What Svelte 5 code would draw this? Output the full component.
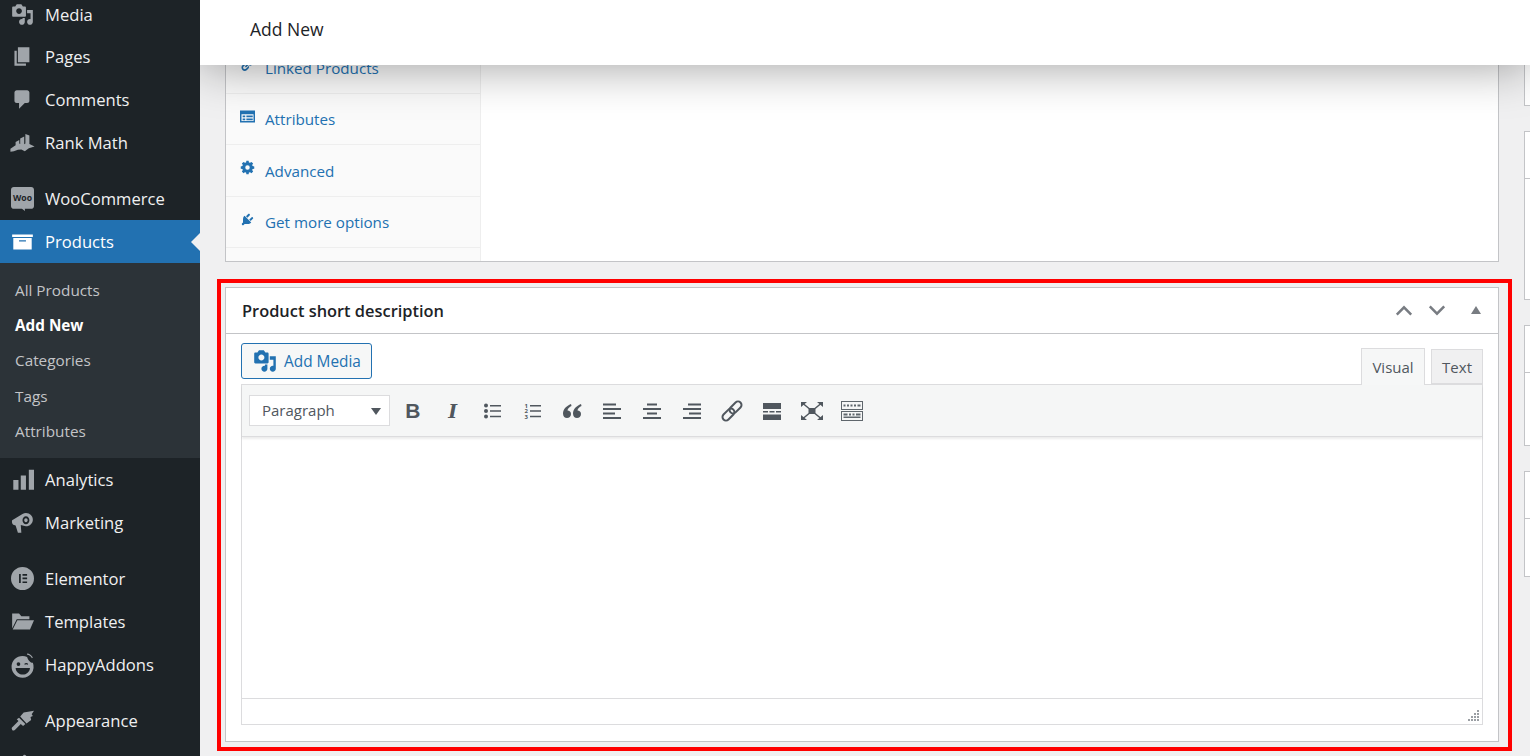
<script>
    const icons = {
        media: "M13 11V4c0-.55-.45-1-1-1h-1.67L9 1H5L3.67 3H2c-.55 0-1 .45-1 1v7c0 .55.45 1 1 1h10c.55 0 1-.45 1-1zM7 4.5c1.38 0 2.5 1.12 2.5 2.5S8.38 9.5 7 9.5 4.5 8.38 4.5 7 5.62 4.5 7 4.5zM14 6h5v10.5c0 1.38-1.12 2.5-2.5 2.5S14 17.88 14 16.5s1.12-2.5 2.5-2.5c.17 0 .34.02.5.05V9h-3V6zm-4 8.05V13h2v3.5c0 1.38-1.12 2.5-2.5 2.5S7 17.88 7 16.5 8.12 14 9.5 14c.17 0 .34.02.5.05z",
        pages: "M6 15V2h10v13H6zm-1 1h8v2H3V5h2v11z",
        comments: "M5 2h9c1.1 0 2 .9 2 2v7c0 1.1-.9 2-2 2h-2l-5 5v-5H5c-1.1 0-2-.9-2-2V4c0-1.1.9-2 2-2z",
        rank: "M-.5 15.500L4 12.300V9.500l3.200-1.600v3l.8.500V6.500l3.500-1.800v6.800l1-.7V2.500l3.500 1.500v7.300l4.500 2.200-5 1.500-3.500 2.500-3-1.500-3 .3-3.500 1.200L-.5 18z",
        woo: "M2.500 0h15C19 0 20 1 20 2.500v14c0 1.500-1 2.500-2.500 2.500H12l.2 1.800L9.500 19h-7C1 19 0 18 0 16.500v-14C0 1 1 0 2.500 0z",
        products: "M19 4v2H1V4h18zM2 7h16v10H2V7zm11 3V9H7v1h6z",
        analytics: "M2 10.500h4.500V19H2zM8.500 6.500H13V19H8.500zM15.500 1.500H20V19h-4.500z",
        marketing: "M1 8l9-5.500c1-.5 2-.7 3-.7 3.500 0 6 2.700 6 5.700s-2.500 5.700-6 5.700c-.7 0-1.500-.2-2-.4l-2.500-.6L9 19H6l-2-6.500-2-.5c-1-.5-1.500-3-1-4zm12-3.500c-1.700 0-3 1.500-3 3.500s1.300 3.500 3 3.500 3-1.500 3-3.500-1.300-3.500-3-3.500zm0 1.800c.9 0 1.500.8 1.500 1.700s-.6 1.700-1.500 1.700-1.500-.8-1.500-1.700.6-1.700 1.500-1.700z",
        elementor: "M10 0a10 10 0 1 0 0 20 10 10 0 0 0 0-20zM7 6h1.500v8H7zM10 6h4v1.500h-4zM10 9.200h4v1.500h-4zM10 12.500h4V14h-4z",
        templates: "M1 3h6l2 2.500h7V8H5L1 16zM5.500 9H20l-3.500 8H1.500z",
        happy: "M10 2.500a9.500 9.500 0 0 0 0 19 9.500 9.500 0 0 0 9-13C18 9 15 7 14 3.500c-1.200-.6-2.600-1-4-1zM6.500 8a1.600 1.600 0 1 1 0 3.200 1.600 1.600 0 0 1 0-3.200zm5 1.500c1-1 2.500-1 3.500 0l-.6.8c-.8-.6-1.600-.6-2.300 0zM4 13h12.500c-.3 3.300-3 5.800-6.200 5.800S4.200 16.300 4 13zM14 .5c2 .1 4 1.500 5 3.500l-.8.5c-.9-1.700-2.500-2.900-4.200-3z",
        appearance: "M7 7.500l5.500 5.500-2 1.800-2-1.800L4 17.500c-1 1.500-3 1.500-3 .5-1-1.500 0-2 1-3l4.500-4.500L5 9zM8 6.500L11 3l9-1.500-2 3 1 1.500-2 1 .5 2.500-4 3z",
        plugins: "M13.11 4.36L9.87 7.6 8 5.73l3.24-3.24c.35-.34 1.05-.2 1.56.32.52.51.66 1.21.31 1.55zm-8 1.77l.91-1.12 9.01 9.01-1.19.84c-.71.71-2.63 1.16-3.82 1.16H6.14L4.9 17.26c-.59.59-1.54.59-2.12 0-.59-.58-.59-1.53 0-2.12l1.24-1.24v-3.88c0-1.13.4-3.19 1.09-3.89zm7.26 3.97l3.24-3.24c.34-.35 1.04-.21 1.55.31.52.51.66 1.21.31 1.55l-3.24 3.25z",
        link: "M17.74 2.76c1.68 1.69 1.68 4.41 0 6.1l-1.53 1.52c-1.12 1.12-2.7 1.47-4.14 1.09l2.62-2.61.76-.77.76-.76c.84-.84.84-2.2 0-3.04-.84-.85-2.2-.85-3.04 0l-.77.76-3.38 3.38c-.37-1.44-.02-3.02 1.1-4.14l1.52-1.53c1.69-1.68 4.42-1.68 6.1 0zM8.59 13.43l5.34-5.34c.42-.42.42-1.1 0-1.52-.44-.43-1.13-.39-1.53 0l-5.33 5.34c-.42.42-.42 1.1 0 1.52.44.43 1.13.39 1.52 0zm-.76 2.29l4.14-4.15c.38 1.44.03 3.02-1.09 4.14l-1.52 1.53c-1.69 1.68-4.41 1.68-6.1 0-1.68-1.68-1.68-4.42 0-6.1l1.53-1.52c1.12-1.12 2.7-1.47 4.14-1.1l-4.14 4.15c-.85.84-.85 2.2 0 3.05.84.84 2.2.84 3.04 0z",
        attributes: "M0 2h20v16H0zM2 7v9h16V7zM3.500 8.500h3.500v2.500H3.500zM3.500 12.500h3.500V15H3.500zM8.500 8.500H17v2.500H8.500zM8.500 12.500H17V15H8.500z",
        gear: "M8.500 1h3l.4 2.200 1.500.6L15.300 2.500l2.200 2.200-1.300 1.900.6 1.500 2.200.4v3l-2.200.4-.6 1.500 1.300 1.900-2.200 2.200-1.900-1.300-1.500.6-.4 2.200h-3l-.4-2.200-1.500-.6-1.900 1.300-2.200-2.200 1.300-1.900-.6-1.500L1 11.500v-3l2.200-.4.6-1.500-1.300-1.900 2.200-2.200 1.900 1.300 1.500-.6zM10 7a3 3 0 1 0 0 6 3 3 0 0 0 0-6z"
    };

    const menu = [
        { label: "Media", icon: "media" },
        { label: "Pages", icon: "pages" },
        { label: "Comments", icon: "comments" },
        { label: "Rank Math", icon: "rank", sep: true },
        { label: "WooCommerce", icon: "woo" },
        { label: "Products", icon: "products", current: true },
        { label: "Analytics", icon: "analytics" },
        { label: "Marketing", icon: "marketing", sep: true },
        { label: "Elementor", icon: "elementor" },
        { label: "Templates", icon: "templates" },
        { label: "HappyAddons", icon: "happy", sep: true },
        { label: "Appearance", icon: "appearance" },
        { label: "", icon: "plugins" }
    ];

    const submenu = ["All Products", "Add New", "Categories", "Tags", "Attributes"];

    const tabs = [
        { label: "Linked Products", icon: "link" },
        { label: "Attributes", icon: "attributes" },
        { label: "Advanced", icon: "gear" },
        { label: "Get more options", icon: "plugins" }
    ];

    const sideBoxes = [
        { head: 0, height: 116 },
        { head: 47, height: 169 },
        { head: 47, height: 121 },
        { head: 47, height: 106 }
    ];
</script>

<div class="page">
    <nav class="sidebar">
        {#each menu as item}
            <a class="item" class:current={item.current} class:sep={item.sep} href="#top">
                <svg class="item-icon" viewBox="0 0 20 20">
                    <path d={icons[item.icon]} fill-rule="evenodd" />
                    {#if item.icon === "woo"}
                        <text class="woo-text" x="10" y="12" text-anchor="middle">Woo</text>
                    {/if}
                </svg>
                <span>{item.label}</span>
            </a>
            {#if item.current}
                <div class="submenu">
                    {#each submenu as sub}
                        <a class="sub" class:on={sub === "Add New"} href="#top">{sub}</a>
                    {/each}
                </div>
            {/if}
        {/each}
    </nav>

    <main class="main">
        <header class="topbar">Add New</header>

        <div class="columns">
            <div class="content">
                <section class="card data">
                    <ul class="tabs">
                        {#each tabs as tab}
                            <li>
                                <svg viewBox="0 0 20 20"><path d={icons[tab.icon]} fill-rule="evenodd" /></svg>
                                <a href="#top">{tab.label}</a>
                            </li>
                        {/each}
                    </ul>
                    <div class="panel"></div>
                </section>

                <section class="card short">
                    <div class="card-head">
                        <h2>Product short description</h2>
                        <div class="handles">
                            <svg viewBox="0 0 20 12"><path d="M2 10.500l8-8 8 8" /></svg>
                            <svg viewBox="0 0 20 12"><path d="M2 1.500l8 8 8-8" /></svg>
                            <i class="toggle"></i>
                        </div>
                    </div>
                    <div class="card-body">
                        <div class="editor-tools">
                            <button class="add-media">
                                <svg viewBox="0 0 20 20"><path d={icons.media} fill-rule="evenodd" /></svg>
                                Add Media
                            </button>
                            <div class="modes">
                                <span class="mode active">Visual</span>
                                <span class="mode">Text</span>
                            </div>
                        </div>
                        <div class="editor">
                            <div class="toolbar">
                                <div class="format">Paragraph<i></i></div>
                                <span class="tool letter bold">B</span>
                                <span class="tool letter italic">I</span>
                                <svg class="tool" viewBox="0 0 20 20">
                                    <circle cx="3" cy="4.500" r="2" /><circle cx="3" cy="10" r="2" /><circle cx="3" cy="15.500" r="2" />
                                    <path d="M7 4h11v1.500H7zM7 9.250h11v1.500H7zM7 14.750h11v1.500H7z" />
                                </svg>
                                <svg class="tool" viewBox="0 0 20 20">
                                    <text class="nums" x="1.500" y="6.500">1</text><text class="nums" x="1.500" y="12">2</text><text class="nums" x="1.500" y="17.500">3</text>
                                    <path d="M7 4h11v1.500H7zM7 9.250h11v1.500H7zM7 14.750h11v1.500H7z" />
                                </svg>
                                <svg class="tool" viewBox="0 0 20 20">
                                    <path d="M9 3C4.500 5 1 8 1 12.500 1 15.500 2.800 17 5 17s4-1.500 4-4c0-2.200-1.500-3.500-3.500-3.500.2-2 2-3.500 4-4.500zM19 3c-4.500 2-8 5-8 9.500 0 3 1.800 4.500 4 4.500s4-1.500 4-4c0-2.200-1.500-3.500-3.500-3.500.2-2 2-3.500 4-4.500z" />
                                </svg>
                                <svg class="tool" viewBox="0 0 20 20"><path d="M1 2.500h13v2H1zM1 7h18v2H1zM1 11.500h12v2H1zM1 16h18v2H1z" /></svg>
                                <svg class="tool" viewBox="0 0 20 20"><path d="M5 2.500h10v2H5zM1 7h18v2H1zM5 11.500h10v2H5zM1 16h18v2H1z" /></svg>
                                <svg class="tool" viewBox="0 0 20 20"><path d="M6 2.500h13v2H6zM1 7h18v2H1zM7 11.500h12v2H7zM1 16h18v2H1z" /></svg>
                                <svg class="tool chain" viewBox="0 0 20 20">
                                    <g transform="rotate(-45 10 10)">
                                        <rect x="-2" y="6.500" width="14" height="7" rx="3.500" />
                                        <rect x="8" y="6.500" width="14" height="7" rx="3.500" />
                                    </g>
                                </svg>
                                <svg class="tool" viewBox="0 0 20 20"><path d="M1 2h18v6H1zM1 10h5v1.600H1zM7.500 10h5v1.600h-5zM14 10h5v1.600h-5zM1 13.500h18v5.500H1z" /></svg>
                                <svg class="tool expand" viewBox="0 0 22 18">
                                    <path d="M7.500 6h7v6h-7zM0 0h6L0 5zM22 0h-6l6 5zM0 18h6l-6-5zM22 18h-6l6-5z" />
                                    <path class="diag" d="M2 1.500L8 6.500M20 1.500L14 6.500M2 16.500L8 11.500M20 16.500L14 11.500" />
                                </svg>
                                <svg class="tool sink" viewBox="0 0 24 20"><path d="M1 0h22v9H1zM2 1v7h20V1zM3.500 3.500h2v2h-2zM7 3.500h2v2H7zM10.500 3.500h2v2h-2zM14 3.500h2v2h-2zM17.500 3.500h3v2h-3zM1 10h22v10H1zM2 11v8h20v-8zM3.500 12.500h4v2h-4zM9 12.500h2v2H9zM12.500 12.500h2v2h-2zM16 12.500h4.500v2H16zM3.500 15.500h17v1.500h-17z" fill-rule="evenodd" /></svg>
                            </div>
                            <div class="writing"></div>
                            <div class="status">
                                <svg class="grip" viewBox="0 0 12 12">
                                    <path d="M10 0h2v2h-2zM10 3h2v2h-2zM7 3h2v2H7zM10 6h2v2h-2zM7 6h2v2H7zM4 6h2v2H4zM10 9h2v2h-2zM7 9h2v2H7zM4 9h2v2H4zM1 9h2v2H1z" />
                                </svg>
                            </div>
                        </div>
                    </div>
                </section>
            </div>

            <aside class="side">
                {#each sideBoxes as box}
                    <div class="side-box" style="height: {box.height}px">
                        {#if box.head}<div class="side-head" style="height: {box.head}px"></div>{/if}
                    </div>
                {/each}
            </aside>
        </div>
    </main>
</div>

<style>
    :global(body) {
        margin: 0;
        background: #f0f0f1;
    }

    .page {
        display: flex;
        height: 756px;
        overflow: hidden;
        font-family: "Open Sans", "Noto Sans", sans-serif;
    }

    a {
        text-decoration: none;
    }

    .sidebar {
        flex: 0 0 200px;
        height: 756px;
        overflow: hidden;
        background: #1d2327;
    }

    .item {
        display: flex;
        align-items: center;
        height: 43px;
        color: #f0f0f1;
        font-size: 16.600px;
        position: relative;
    }

    .item:first-child {
        height: 41px;
        margin-top: -6px;
    }

    .item.sep {
        margin-bottom: 13px;
    }

    .item-icon {
        width: 23px;
        height: 23px;
        margin: 0 11px;
        fill: #a0a5aa;
        flex: none;
        overflow: visible;
    }

    .woo-text {
        font-size: 7.500px;
        font-weight: 700;
        fill: #1d2327;
    }

    .item.current {
        background: #2271b1;
        color: #fff;
    }

    .item.current .item-icon {
        fill: #fff;
    }

    .item.current::after {
        content: "";
        position: absolute;
        right: 0;
        top: 13px;
        border: 9px solid transparent;
        border-right-color: #f0f0f1;
        border-left-width: 0;
    }

    .submenu {
        background: #2c3338;
        padding: 9.700px 0 8.800px;
    }

    .sub {
        display: block;
        height: 35.300px;
        line-height: 35.300px;
        padding-left: 15px;
        font-size: 15.300px;
        color: #c3c4c7;
    }

    .sub.on {
        color: #fff;
        font-weight: 700;
    }

    .main {
        flex: 1;
        position: relative;
        height: 756px;
        overflow: hidden;
    }

    .topbar {
        position: absolute;
        z-index: 2;
        top: 0;
        left: 0;
        right: 0;
        height: 65px;
        padding: 16.500px 0 0 50px;
        box-sizing: border-box;
        background: #fff;
        box-shadow: 0 0 50px rgba(0, 0, 0, 0.4);
        color: #1d2327;
        font-size: 17.500px;
        line-height: 24px;
    }

    .columns {
        display: flex;
        gap: 25px;
        margin-top: -10px;
        padding-left: 25px;
    }

    .content {
        flex: 0 0 1274px;
        display: flex;
        flex-direction: column;
        gap: 25px;
    }

    .card {
        background: #fff;
        border: 1px solid #c3c4c7;
        box-sizing: border-box;
    }

    .data {
        display: flex;
        height: 272px;
    }

    .tabs {
        flex: 0 0 254px;
        margin: 0;
        padding: 51.400px 0 0;
        list-style: none;
        background: #fafafa;
        border-right: 1px solid #eee;
    }

    .tabs li {
        display: flex;
        align-items: center;
        height: 51.400px;
        padding: 0.800px 0 0 14px;
        box-sizing: border-box;
        border-bottom: 1px solid #eee;
        font-size: 15.200px;
    }

    .tabs svg {
        width: 15px;
        height: 15px;
        margin: -6px 10px 0 0;
        fill: #2271b1;
    }

    .tabs a {
        color: #2271b1;
    }

    .panel {
        flex: 1;
    }

    .short {
        position: relative;
        height: 455px;
    }

    /* red annotation drawn around the box */
    .short::after {
        content: "";
        position: absolute;
        inset: -9px -14px -10px -9px;
        border: 4px solid #f00;
        pointer-events: none;
    }

    .card-head {
        display: flex;
        align-items: center;
        justify-content: space-between;
        height: 45px;
        padding: 0 17px 0 16px;
        border-bottom: 1px solid #c3c4c7;
    }

    h2 {
        margin: 0;
        font-size: 16.400px;
        font-weight: 600;
        color: #1d2327;
    }

    .handles {
        display: flex;
        align-items: center;
    }

    .handles svg {
        width: 18px;
        height: 11px;
        margin-right: 15px;
        fill: none;
        stroke: #787c82;
        stroke-width: 2.800;
    }

    .toggle {
        width: 0;
        height: 0;
        margin: 0 0 2px 10px;
        border: 5.500px solid transparent;
        border-top-width: 0;
        border-bottom: 8px solid #787c82;
    }

    .card-body {
        padding: 9px 15px 0;
    }

    .editor-tools {
        display: flex;
        justify-content: space-between;
        height: 41px;
    }

    .add-media {
        display: flex;
        align-items: center;
        gap: 7px;
        width: 131px;
        height: 36px;
        padding: 0 0 0 11px;
        box-sizing: border-box;
        border: 1px solid #2271b1;
        border-radius: 3px;
        background: #f6f7f7;
        color: #2271b1;
        font-family: inherit;
        font-size: 15.400px;
    }

    .add-media svg {
        width: 24px;
        height: 24px;
        fill: #2271b1;
    }

    .modes {
        display: flex;
        align-items: flex-end;
        gap: 6px;
        padding-top: 6px;
    }

    .mode {
        height: 35px;
        line-height: 34px;
        padding: 0 10px;
        box-sizing: border-box;
        border: 1px solid #dcdcde;
        background: #f0f0f1;
        color: #50575e;
        font-size: 15px;
    }

    .mode.active {
        position: relative;
        height: 37px;
        margin-bottom: -1px;
        line-height: 36px;
        padding: 0 10.500px;
        border-bottom: 0;
        background: #f6f7f7;
        z-index: 1;
    }

    .editor {
        border: 1px solid #dcdcde;
        height: 341px;
        box-sizing: border-box;
        display: flex;
        flex-direction: column;
    }

    .toolbar {
        position: relative;
        z-index: 1;
        display: flex;
        align-items: center;
        height: 52px;
        padding-left: 7px;
        background: #f5f6f6;
        border-bottom: 1px solid #dcdcde;
        box-shadow: 0 2px 2px rgba(0, 0, 0, 0.08);
        box-sizing: border-box;
        gap: 19.900px;
    }

    .format {
        position: relative;
        width: 141px;
        height: 31px;
        line-height: 29px;
        margin-right: -7px;
        padding-left: 12px;
        box-sizing: border-box;
        border: 1px solid #dcdcde;
        background: #fff;
        color: #50575e;
        font-size: 15px;
    }

    .format i {
        position: absolute;
        right: 8px;
        top: 12px;
        border: 5.500px solid transparent;
        border-bottom-width: 0;
        border-top: 7px solid #50575e;
    }

    .tool {
        width: 20px;
        height: 20px;
        flex: none;
        fill: #50575e;
    }

    .chain {
        fill: none;
        stroke: #50575e;
        stroke-width: 2;
        overflow: visible;
    }

    .expand {
        width: 22px;
        height: 18px;
        margin: 0 -1px;
    }

    .diag {
        fill: none;
        stroke: #50575e;
        stroke-width: 1.500;
    }

    .sink {
        width: 24px;
        margin-left: -1.500px;
        fill: #5f666c;
    }

    .letter {
        font-size: 21px;
        line-height: 20px;
        text-align: center;
        color: #50575e;
        font-family: "Liberation Sans", sans-serif;
    }

    .bold {
        font-weight: 700;
    }

    .italic {
        font-family: "DejaVu Serif", serif;
        font-size: 19px;
        font-style: italic;
        font-weight: 700;
    }

    .nums {
        font-size: 6px;
        font-weight: 700;
    }

    .writing {
        flex: 1;
        background: #fff;
    }

    .status {
        position: relative;
        height: 26px;
        border-top: 1px solid #dcdcde;
        box-sizing: border-box;
    }

    .grip {
        position: absolute;
        right: 3px;
        bottom: 2px;
        width: 12px;
        height: 12px;
        fill: #9a9ea3;
    }

    .side {
        flex: 1;
        display: flex;
        flex-direction: column;
        gap: 25px;
    }

    .side-box {
        border: 1px solid #c3c4c7;
        border-right: 0;
        background: #fff;
        box-sizing: border-box;
    }

    .side-head {
        border-bottom: 1px solid #c3c4c7;
        box-sizing: border-box;
    }
</style>
